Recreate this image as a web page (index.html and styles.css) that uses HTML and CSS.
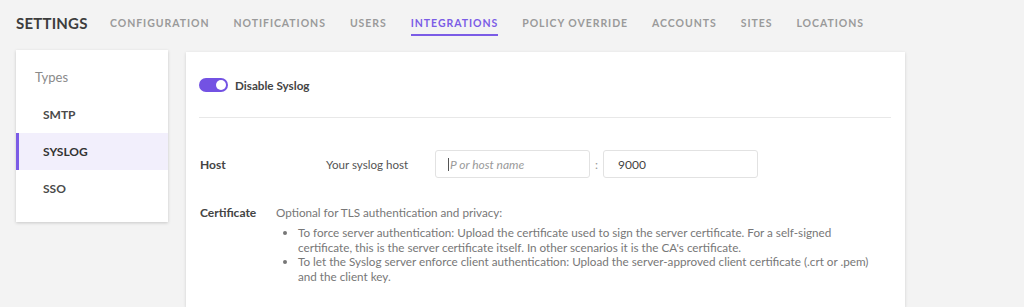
FILE: index.html
```html
<!DOCTYPE html>
<html>
<head>
<meta charset="utf-8">
<link rel="stylesheet" href="styles.css">
</head>
<body>
<header class="top">
  <div class="title">SETTINGS</div>
  <nav class="tabs">
    <span class="tab">CONFIGURATION</span>
    <span class="tab">NOTIFICATIONS</span>
    <span class="tab">USERS</span>
    <span class="tab active">INTEGRATIONS</span>
    <span class="tab">POLICY OVERRIDE</span>
    <span class="tab">ACCOUNTS</span>
    <span class="tab">SITES</span>
    <span class="tab">LOCATIONS</span>
  </nav>
</header>
<div class="content">
  <aside class="side">
    <div class="side-head">Types</div>
    <div class="side-item">SMTP</div>
    <div class="side-item selected">SYSLOG</div>
    <div class="side-item">SSO</div>
  </aside>
  <section class="card">
    <div class="toggle-row">
      <span class="toggle"><span class="knob"></span></span>
      <span class="toggle-label">Disable Syslog</span>
    </div>
    <div class="host-row">
      <span class="label">Host</span>
      <span class="sub">Your syslog host</span>
      <span class="input"><span class="caret"></span><span class="ph">P or host name</span></span>
      <span class="colon">:</span>
      <span class="input port">9000</span>
    </div>
    <div class="cert-row">
      <span class="label">Certificate</span>
      <div class="cert-text">
        <p>Optional for TLS authentication and privacy:</p>
        <ul>
          <li>To force server authentication: Upload the certificate used to sign the server certificate. For a self-signed certificate, this is the server certificate itself. In other scenarios it is the CA's certificate.</li>
          <li>To let the Syslog server enforce client authentication: Upload the server-approved client certificate (.crt or .pem) and the client key.</li>
        </ul>
      </div>
    </div>
  </section>
</div>
</body>
</html>
```

FILE: styles.css
```css
* { box-sizing: border-box; }
html, body { margin: 0; padding: 0; }
body {
  background: #f3f3f3;
  font-family: Lato, "Open Sans", sans-serif;
  color: #444;
  width: 1024px;
  height: 307px;
  overflow: hidden;
}
.top {
  display: flex;
  align-items: flex-start;
  height: 46px;
  padding: 14px 0 0 16px;
}
.title {
  font-size: 15px;
  font-weight: 700;
  line-height: 18px;
  color: #3d3d3d;
  letter-spacing: 0.2px;
  width: 94px;
}
.tabs { display: flex; gap: 24px; }
.tab {
  font-size: 10.5px;
  font-weight: 700;
  letter-spacing: 0.95px;
  color: #9a9a9a;
  line-height: 18px;
  padding-bottom: 2px;
  border-bottom: 2px solid transparent;
}
.tab.active {
  color: #7b5ce6;
  border-bottom-color: #7b5ce6;
}
.content {
  display: flex;
  align-items: flex-start;
  gap: 18px;
  padding-left: 16px;
}
.side {
  margin-top: 4px;
  width: 152px;
  height: 172px;
  background: #fff;
  box-shadow: 0 1px 3px rgba(0,0,0,0.18);
}
.side-head {
  padding: 19px 19px 11px;
  line-height: 16px;
  font-size: 13px;
  color: #8a8a8a;
}
.side-item {
  height: 37px;
  line-height: 37px;
  padding-left: 24px;
  font-size: 12px;
  font-weight: 700;
  color: #4a4a4a;
  border-left: 3px solid transparent;
}
.side-item.selected {
  background: #f2effc;
  border-left-color: #7b5ce6;
  color: #333;
}
.card {
  margin-top: 6px;
  width: 719px;
  height: 255px;
  background: #fff;
  box-shadow: 0 1px 3px rgba(0,0,0,0.15);
  padding: 0 14px 0 13px;
}
.toggle-row {
  display: flex;
  align-items: center;
  gap: 7px;
  height: 66px;
  border-bottom: 1px solid #e8e8e8;
}
.toggle {
  width: 29px;
  height: 14px;
  border-radius: 7px;
  background: #7352e3;
  display: flex;
  justify-content: flex-end;
  align-items: center;
  padding-right: 2px;
}
.knob {
  width: 10px;
  height: 10px;
  border-radius: 50%;
  background: #fff;
}
.toggle-label {
  font-size: 11.7px;
  font-weight: 700;
  color: #444;
}
.host-row {
  display: flex;
  align-items: center;
  margin-top: 32px;
  height: 28px;
  padding-left: 1px;
}
.label {
  font-size: 12px;
  font-weight: 700;
  color: #444;
}
.host-row .label { width: 126px; }
.sub {
  width: 109px;
  font-size: 11.6px;
  color: #555;
}
.input {
  display: flex;
  align-items: center;
  width: 155px;
  height: 28px;
  border: 1px solid #e2e2e2;
  border-radius: 3px;
  padding-left: 12px;
  font-size: 12px;
  color: #444;
}
.caret {
  width: 1px;
  height: 13px;
  background: #555;
  margin-right: 1px;
}
.ph { font-style: italic; color: #9a9a9a; }
.colon {
  width: 13px;
  text-align: center;
  color: #999;
  font-size: 12px;
}
.port { padding-left: 14px; }
.cert-row {
  display: flex;
  align-items: flex-start;
  margin-top: 27px;
  padding-left: 1px;
}
.cert-row .label { width: 76px; line-height: 15px; }
.cert-text {
  width: 610px;
  font-size: 11.7px;
  color: #777;
  line-height: 14.5px;
}
.cert-text p { margin: 0; line-height: 15px; }
.cert-text ul {
  margin: 5px 0 0;
  padding-left: 22px;
  width: 602px;
}
```
